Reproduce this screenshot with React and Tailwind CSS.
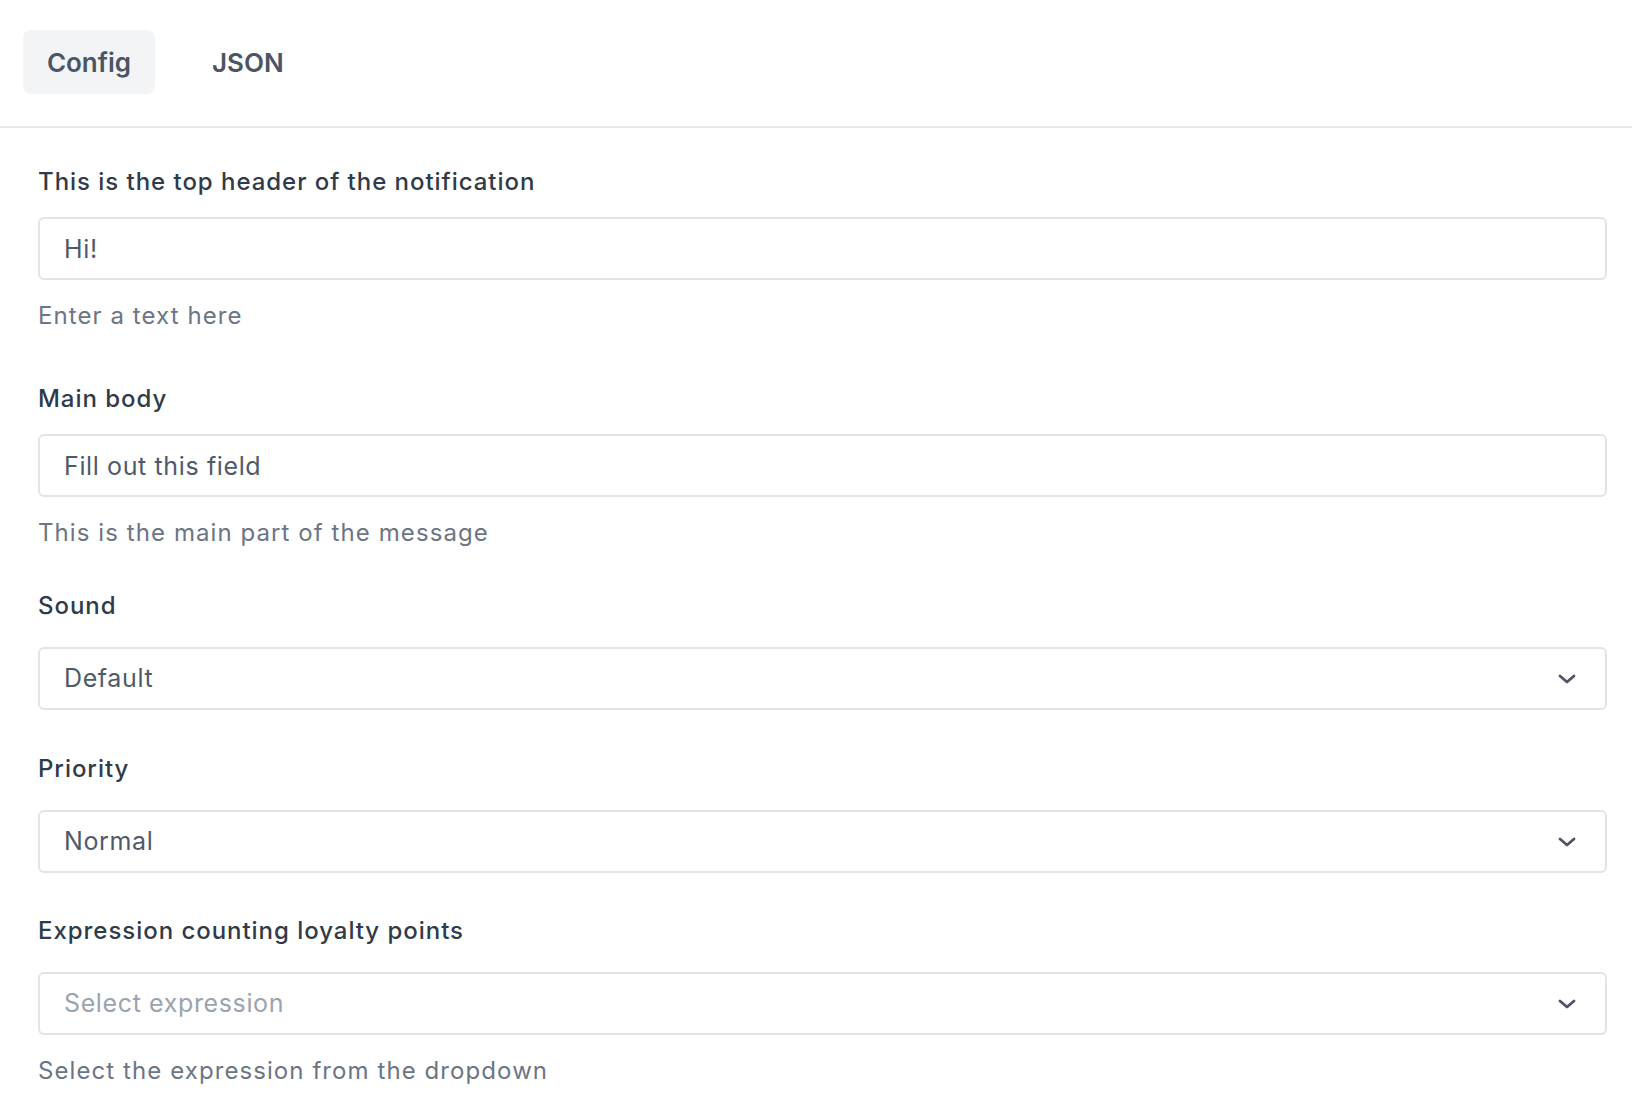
import React, { useState } from 'react';

const Chevron = () => (
    <svg width="18" height="10" viewBox="0 0 18 10" fill="none" className="shrink-0">
        <path d="M2 2l7 6 7-6" stroke="#4b5563" strokeWidth="2.8" strokeLinecap="round" strokeLinejoin="round" />
    </svg>
);

const TextField = ({ label, value, onChange, help, className = '' }) => (
    <div className={className}>
        <label className="block text-[24px] leading-[32px] font-medium tracking-[0.04em] text-[#2f3a4a]">{label}</label>
        <input
            type="text"
            value={value}
            onChange={(e) => onChange(e.target.value)}
            className="mt-[19px] block w-full h-[63px] border-2 border-[#e1e4e8] rounded-[6px] pl-[24px] pr-4 text-[25px] tracking-[0.025em] text-[#4f5a69] outline-none bg-white"
        />
        <p className="mt-[20px] text-[24px] leading-[32px] tracking-[0.045em] text-[#6b7584]">{help}</p>
    </div>
);

const SelectField = ({ label, value, placeholder, help, className = '' }) => (
    <div className={className}>
        <label className="block text-[24px] leading-[32px] font-medium tracking-[0.04em] text-[#2f3a4a]">{label}</label>
        <button className="mt-[25px] flex items-center justify-between w-full h-[63px] border-2 border-[#e1e4e8] rounded-[6px] pl-[24px] pr-[29px] bg-white text-left">
            <span className={`text-[25px] tracking-[0.025em] ${value ? 'text-[#4f5a69]' : 'text-[#9aa3ae]'}`}>{value || placeholder}</span>
            <Chevron />
        </button>
        {help && <p className="mt-[20px] text-[24px] leading-[32px] tracking-[0.045em] text-[#6b7584]">{help}</p>}
    </div>
);

export default function App() {
    const [tab, setTab] = useState('config');
    const [header, setHeader] = useState('Hi!');
    const [body, setBody] = useState('Fill out this field');

    return (
        <div className="min-h-screen bg-white" style={{ fontFamily: 'Inter, "Noto Sans", sans-serif' }}>
            <div className="flex items-center gap-[32px] pl-[23px] pt-[30px] pb-[32px] border-b-2 border-[#e5e9ea]">
                <button
                    onClick={() => setTab('config')}
                    className={`h-[64px] w-[132px] rounded-[8px] text-[26px] font-semibold text-[#4b5563] ${tab === 'config' ? 'bg-[#f3f4f6]' : ''}`}
                >
                    Config
                </button>
                <button
                    onClick={() => setTab('json')}
                    className={`h-[64px] px-[25px] rounded-[8px] text-[26px] font-semibold text-[#4b5563] ${tab === 'json' ? 'bg-[#f3f4f6]' : ''}`}
                >
                    JSON
                </button>
            </div>
            <div className="pl-[38px] pr-[25px] pt-[38px]">
                <TextField label="This is the top header of the notification" value={header} onChange={setHeader} help="Enter a text here" />
                <TextField className="mt-[51px]" label="Main body" value={body} onChange={setBody} help="This is the main part of the message" />
                <SelectField className="mt-[41px]" label="Sound" value="Default" />
                <SelectField className="mt-[43px]" label="Priority" value="Normal" />
                <SelectField className="mt-[42px]" label="Expression counting loyalty points" placeholder="Select expression" help="Select the expression from the dropdown" />
            </div>
        </div>
    );
}
